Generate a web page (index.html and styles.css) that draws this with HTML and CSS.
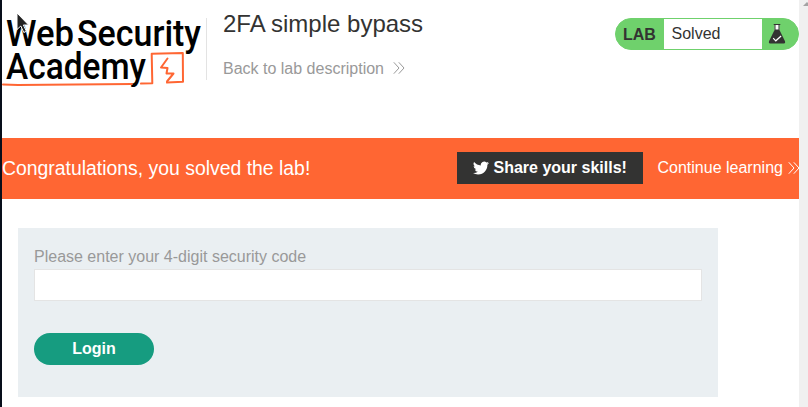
FILE: index.html
```html
<!DOCTYPE html>
<html lang="en">
<head>
<meta charset="utf-8">
<title>2FA simple bypass</title>
<link rel="stylesheet" href="styles.css">
</head>
<body>
<div class="page">
  <header class="header">
    <svg class="logo" width="204" height="92" viewBox="0 0 204 92" role="img" aria-label="Web Security Academy">
      <g class="logo-text">
        <text x="4" y="46.300" textLength="68" lengthAdjust="spacingAndGlyphs">Web</text>
        <text x="75" y="46.300" textLength="124" lengthAdjust="spacingAndGlyphs">Security</text>
        <text x="4" y="79" textLength="140" lengthAdjust="spacingAndGlyphs">Academy</text>
      </g>
      <g fill="none" stroke="#ff6633" stroke-width="2" stroke-linejoin="round" stroke-linecap="round">
        <path d="M1 84.500L16 85L130 84M139 83.600L150.300 83.200L149.700 53.700L180.800 53L181 81.800L165 82.600"/>
        <path d="M165.500 58.500L159 67.500L165.500 68L164.500 73.500L171.500 73.500L165 81.500" stroke-width="2"/>
      </g>
    </svg>
    <div class="title">
      <h1>2FA simple bypass</h1>
      <a class="back">Back to lab description
        <svg width="12" height="14" viewBox="0 0 12 14"><path d="M.8 1.300L6 7L.8 12.700M5.800 1.300L11 7L5.800 12.700"/></svg>
      </a>
    </div>
    <div class="status">
      <b>LAB</b>
      <span>Solved</span>
      <svg width="36" height="30" viewBox="0 0 36 30">
        <path fill="#fff" d="M12.700 6h4.600v8h-4.600z"/>
        <path fill="#333332" d="M11.700 5h6.600v1h-.8v5l5.500 11.300q.7 2.200-1 2.200H8q-1.700 0-1-2.200L12.500 11V6h-.8zM13.500 6v4.500h3V6z"/>
        <path fill="none" stroke="#fff" stroke-width="1.200" d="M11.200 19.200l2.600 2.600l5.300-4.800"/>
      </svg>
    </div>
  </header>
  <section class="banner">
    <p>Congratulations, you solved the lab!</p>
    <a class="share">
      <svg width="16" height="16" viewBox="0 0 24 24"><path fill="#fff" d="M23.950 4.570a10 10 0 0 1-2.820.780 4.960 4.960 0 0 0 2.160-2.730c-.950.560-2 .960-3.130 1.190a4.920 4.920 0 0 0-8.380 4.480C7.690 8.100 4.070 6.130 1.640 3.160a4.920 4.920 0 0 0 1.520 6.570 4.900 4.900 0 0 1-2.230-.620v.060a4.920 4.920 0 0 0 3.950 4.830 5 5 0 0 1-2.210.080 4.940 4.940 0 0 0 4.600 3.420A9.870 9.870 0 0 1 0 19.540a13.990 13.990 0 0 0 7.550 2.210c9.050 0 14-7.500 14-13.980 0-.210 0-.420-.020-.630a9.940 9.940 0 0 0 2.460-2.550z"/></svg>
      <b>Share your skills!</b>
    </a>
    <a class="continue">Continue learning
      <svg width="12" height="14" viewBox="0 0 12 14"><path d="M.8 1.300L6 7L.8 12.700M5.800 1.300L11 7L5.800 12.700"/></svg>
    </a>
  </section>
  <form class="login">
    <label for="code">Please enter your 4-digit security code</label>
    <input id="code" type="text">
    <button type="button">Login</button>
  </form>
  <svg class="cursor" width="16" height="22" viewBox="0 0 16 22"><path fill="#222" stroke="#fff" d="M1 1v16.500l3.800-3.500 3 6.500 2.600-1.200-3-6.300h5.200z"/></svg>
</div>
<div class="scrollbar"><i></i></div>
</body>
</html>
```
FILE: styles.css
```css
* { box-sizing: border-box; }
body {
  margin: 0;
  height: 407px;
  display: flex;
  overflow: hidden;
  background: #fff;
  border-left: 2px solid #080e1a;
  font: 16px/18px "Liberation Sans", Arial, sans-serif;
  color: #333332;
}
.page { position: relative; width: 797px; }
.scrollbar { width: 9px; background: #f0f0f0; }
.scrollbar i {
  display: block;
  width: 8px;
  height: 4px;
  margin: 2px 0 0 4px;
  background: #a3a3a3;
  clip-path: polygon(50% 0, 100% 100%, 0 100%);
}
.header { display: flex; height: 138px; }
.logo { flex: none; overflow: visible; }
.logo-text {
  font: 500 37px Roboto, sans-serif;
  fill: #000;
}
.title {
  height: 62px;
  margin-top: 18px;
  border-left: 1px solid #e3e3e3;
  padding-left: 16px;
}
h1 {
  margin: -8px 0 0;
  font-size: 24px;
  line-height: 28px;
  font-weight: 400;
  white-space: nowrap;
}
a svg { fill: none; stroke: currentColor; stroke-width: 1; }
.back { display: flex; align-items: center; gap: 9px; margin-top: 22px; color: #999; white-space: nowrap; }
.back svg { margin-top: -2px; }
.status {
  display: flex;
  width: 184px;
  height: 32px;
  margin: 18px 0 0 auto;
  border: 1px solid #6fd16c;
  border-radius: 16px;
  background: #6fd16c;
  line-height: 30px;
}
.status b { width: 48px; padding: 1px 0 0 7px; }
.status span { flex: 1; background: #fff; padding-left: 7.500px; }
.banner {
  display: flex;
  align-items: center;
  height: 61px;
  padding-bottom: 1px;
  background: #ff6633;
  color: #fff;
}
.banner p { margin: 0 auto 0 0; font-size: 19.400px; }
.share {
  display: flex;
  align-items: center;
  gap: 4.500px;
  width: 186px;
  height: 32px;
  padding-left: 16px;
  margin-right: 14.500px;
  background: #333332;
  white-space: nowrap;
}
.share svg { stroke: none; }
.continue { display: flex; align-items: center; gap: 5px; width: 141.500px; white-space: nowrap; }
.share { margin-left: .2px; }
.continue svg { flex: none; }
.login {
  display: flex;
  flex-direction: column;
  width: 700px;
  height: 169px;
  margin: 29px 0 0 16px;
  padding: 20px 16px;
  background: #eaeff2;
  color: #999;
}
.login input {
  height: 32px;
  margin: 3px 0 32px;
  border: 1px solid #e4e4e4;
  background: #fff;
}
.login button {
  width: 120px;
  height: 32px;
  padding: 0;
  border: 0;
  border-radius: 16px;
  background: #169c80;
  color: #fff;
  font: bold 16px "Liberation Sans", Arial, sans-serif;
}
.cursor { position: absolute; left: 14px; top: 12px; }
```
